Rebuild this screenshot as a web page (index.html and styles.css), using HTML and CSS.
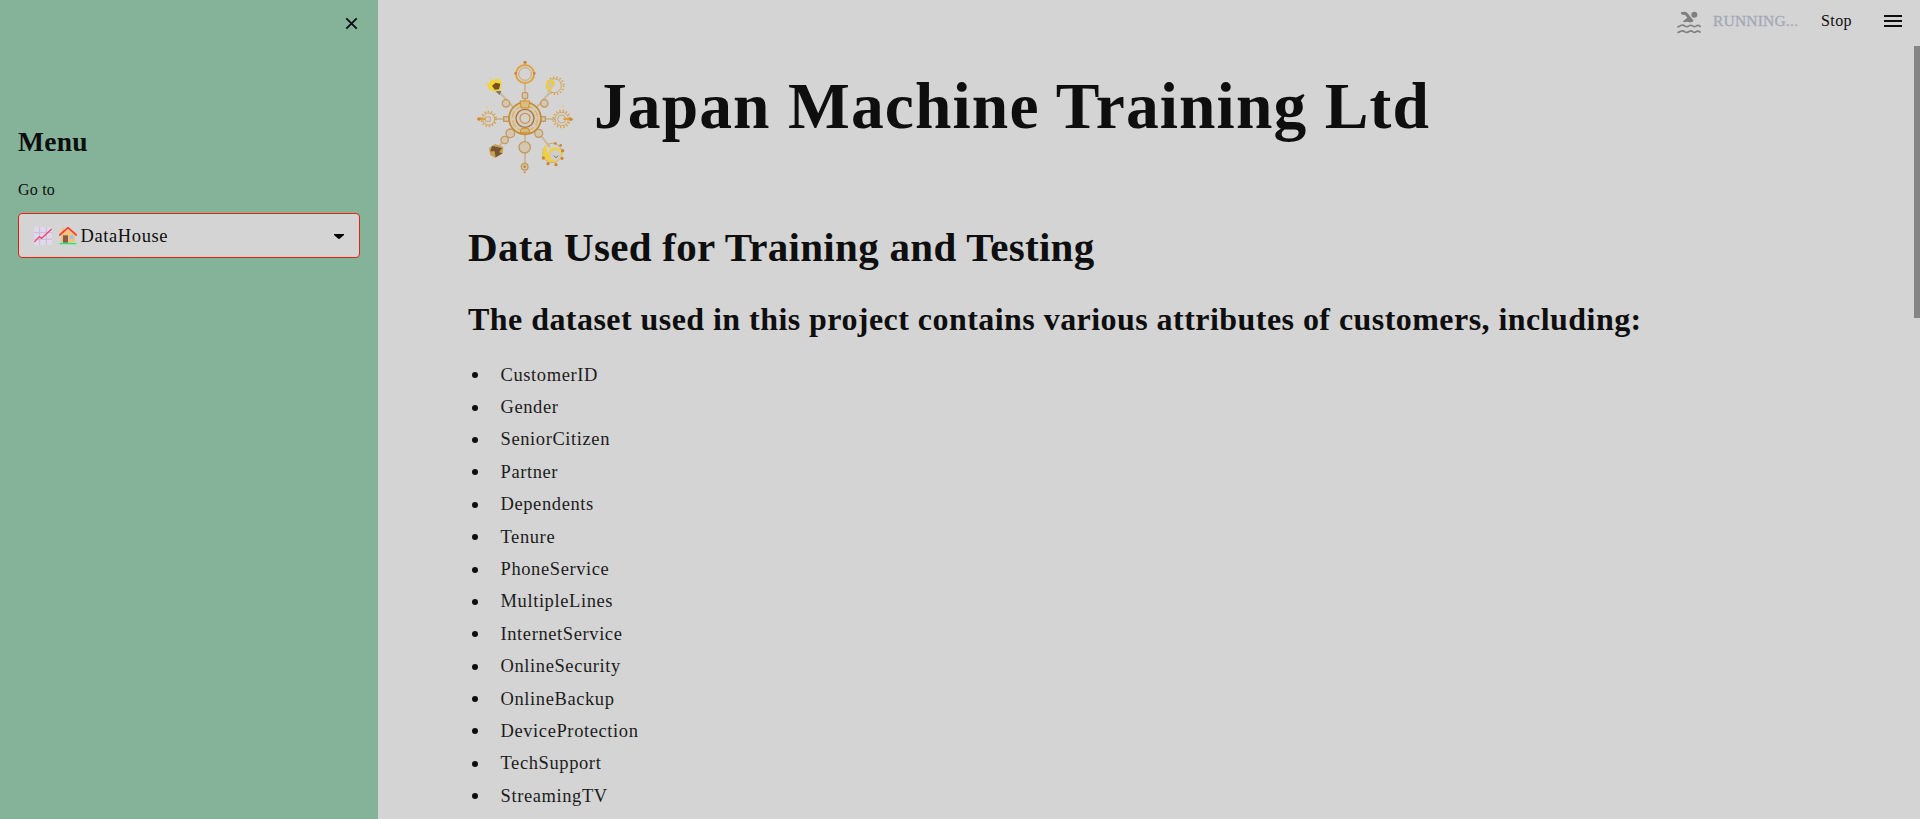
FILE: index.html
```html
<!DOCTYPE html>
<html lang="en">
<head>
<meta charset="utf-8">
<title>Japan Machine Training Ltd</title>
<link rel="stylesheet" href="styles.css">
</head>
<body>
<div class="app">
  <aside class="sidebar">
    <div class="sidebar-top">
      <svg class="close" viewBox="0 0 14 14"><path d="M1.4 1.4 12.6 12.6M12.6 1.4 1.4 12.6"/></svg>
    </div>
    <h2 class="menu-title">Menu</h2>
    <label class="menu-label">Go to</label>
    <div class="select">
      <svg class="emoji" viewBox="0 0 54 54">
        <rect width="54" height="54" rx="4" fill="#e1d8ec"/>
        <path d="M17 0V54M37 0V54M0 17H54M0 37H54" stroke="#c6bcd6" stroke-width="3" fill="none"/>
        <path d="M2 44 16 29 23 34 52 7" stroke="#f8416f" stroke-width="4" fill="none" stroke-linecap="round" stroke-linejoin="round"/>
      </svg>
      <svg class="emoji" viewBox="0 0 54 54">
        <path d="M8 2H16V12L27 4 48 24V48H6V12H8Z" fill="#f9c27a"/>
        <path d="M2 24 27 2 52 24" stroke="#f44336" stroke-width="5" fill="none" stroke-linecap="round" stroke-linejoin="round"/>
        <rect x="12" y="25" width="15" height="22" fill="#8b5a49"/>
        <rect x="32" y="25" width="11" height="11" fill="#8fc7f2"/>
        <rect x="1" y="48" width="52" height="4" rx="2" fill="#00f28c"/>
      </svg>
      <span class="select-value">DataHouse</span>
      <svg class="caret" viewBox="0 0 10 5" preserveAspectRatio="none"><path d="M0 0H10V.9L6 4.5Q5 5.3 4 4.5L0 .9Z"/></svg>
    </div>
  </aside>
  <main class="main">
    <header class="toolbar">
      <svg class="swimmer" viewBox="0 0 72 68">
        <circle cx="52" cy="11" r="9"/>
        <path d="M12 3 22 2Q28 2 32 6L50 29Q46 34 39 34Q31 30 24 33L17 31L31 20L25 12L12 9Z"/>
        <path class="wave" d="M1 47Q7 47 11 43Q18 40 24 45Q30 49 36 44Q42 40 48 45Q54 49 60 43Q65 42 71 47M1 64Q7 64 11 60Q18 57 24 62Q30 66 36 61Q42 57 48 62Q54 66 60 60Q65 59 71 64"/>
      </svg>
      <span class="running">RUNNING...</span>
      <span class="stop">Stop</span>
      <svg class="burger" viewBox="0 0 18 12"><path d="M0 1H18M0 6H18M0 11H18"/></svg>
    </header>
    <div class="content">
      <div class="brand">
        <svg class="logo" viewBox="0 0 390 390">
          <g class="arm">
            <path d="M195 155V98M195 250V350M145 207H104M245 207H285M160 172 114 122M230 172 270 127M158 240 112 295M230 240 270 292"/>
          </g>
          <g class="gear">
            <circle cx="195" cy="72" r="27"/><circle class="thin" cx="195" cy="72" r="19"/>
            <circle class="teeth" cx="86" cy="207" r="22"/><circle class="thin" cx="86" cy="207" r="18"/>
            <circle class="teeth" cx="305" cy="207" r="25"/><circle class="thin" cx="305" cy="207" r="20"/><circle class="thin" cx="305" cy="207" r="12"/>
            <circle class="teeth" cx="286" cy="107" r="25"/><circle class="thin" cx="283" cy="107" r="21"/>
            <circle class="thin" cx="277" cy="309" r="29"/>
            <path d="M52 207H78M310 207H336"/><path class="thin" d="M76 201H91V214H76Z"/>
          </g>
          <g class="joint">
            <rect x="187" y="128" width="16" height="18" rx="4"/>
            <circle cx="138" cy="160" r="11"/><circle cx="253" cy="160" r="11"/>
            <circle cx="151" cy="250" r="13"/><circle cx="134" cy="270" r="11"/>
            <circle cx="236" cy="250" r="12"/><circle cx="194" cy="292" r="17"/><circle cx="194" cy="350" r="10"/>
            <rect x="131" y="200" width="16" height="14"/><rect x="242" y="200" width="14" height="14"/>
          </g>
          <circle cx="195" cy="205" r="48" fill="#d4cbb8" stroke="#c48b35" stroke-width="5"/>
          <circle cx="195" cy="205" r="38" fill="none" stroke="#dfb25c" stroke-width="4" stroke-dasharray="22 8"/>
          <circle cx="195" cy="205" r="27" fill="#d5cdc1" stroke="#a87543" stroke-width="4"/>
          <circle cx="195" cy="205" r="15" fill="#d4d0ca" stroke="#c99552" stroke-width="4"/>
          <path d="M184 174 180 153H209L206 174ZM184 236 180 248H209L206 236Z" fill="#d8bd83" stroke="#d28e24" stroke-width="3"/>
          <path d="M82 113Q84 96 96 89L119 86 126 102 117 126 103 124 91 121Z" fill="#f4d43c"/>
          <path d="M96 107 107 98 121 101 117 118 104 119Z" fill="#74521d"/>
          <path d="M106 124 119 135 124 123Z" fill="#817062"/>
          <path d="M87 294 105 282 130 291 128 310 106 324 91 315Z" fill="#c9a151"/>
          <path d="M96 288 126 294 117 307 128 310 107 322 104 304 91 304Z" fill="#75552f"/>
          <path d="M258 95 272 88Q285 91 286 104L274 119 264 122 257 110Z" fill="#eacb52"/>
          <circle cx="271" cy="105" r="7" fill="#c9c4bd"/>
          <path d="M248 317Q245 291 264 282Q255 299 266 311Q267 291 286 292Q306 294 306 315Q301 335 280 336Q261 337 248 317Z" fill="#f0ce45"/>
          <circle cx="286" cy="316" r="16" fill="#cecdd1"/><path d="M281 317 288 323 295 317" fill="none" stroke="#93764e" stroke-width="3"/>
          <g fill="#c9873a">
            <circle cx="195" cy="37" r="5"/><circle cx="167" cy="70" r="4"/><circle cx="223" cy="70" r="4"/>
            <circle cx="57" cy="207" r="5"/><circle cx="333" cy="208" r="5"/>
            <circle cx="250" cy="324" r="5"/><circle cx="264" cy="341" r="5"/><circle cx="288" cy="344" r="5"/><circle cx="306" cy="325" r="5"/><circle cx="308" cy="302" r="5"/><circle cx="302" cy="286" r="4"/><circle cx="286" cy="280" r="4"/><circle cx="194" cy="350" r="4"/><circle cx="194" cy="367" r="3"/>
          </g>
          <path d="M78 101 84 104M90 83 93 87M81 168V174M310 165V171" stroke="#e9cd64" stroke-width="4"/>
        </svg>
        <h1 class="brand-name">Japan Machine Training Ltd</h1>
      </div>
      <h2 class="title">Data Used for Training and Testing</h2>
      <h3 class="subtitle">The dataset used in this project contains various attributes of customers, including:</h3>
      <ul class="fields">
        <li>CustomerID</li>
        <li>Gender</li>
        <li>SeniorCitizen</li>
        <li>Partner</li>
        <li>Dependents</li>
        <li>Tenure</li>
        <li>PhoneService</li>
        <li>MultipleLines</li>
        <li>InternetService</li>
        <li>OnlineSecurity</li>
        <li>OnlineBackup</li>
        <li>DeviceProtection</li>
        <li>TechSupport</li>
        <li>StreamingTV</li>
      </ul>
    </div>
    <div class="scroll-thumb"></div>
  </main>
</div>
</body>
</html>
```
FILE: styles.css
```css
* { box-sizing: border-box; }
html, body { margin: 0; height: 100%; overflow: hidden; }
body {
  background: #d4d4d4;
  color: #0e0e0e;
  font-family: "Source Serif Pro", "Liberation Serif", serif;
}
h1, h2, h3, ul { margin: 0; padding: 0; }
svg { display: block; flex: none; }
.app { display: flex; height: 100vh; }

.sidebar { width: 378px; flex: none; padding: 0 18px; background: #84b39a; }
.sidebar-top { height: 124px; display: flex; justify-content: flex-end; padding: 17px 2px 0 0; }
.close { width: 13px; height: 13px; }
.close path { stroke: #0e0e0e; stroke-width: 2; fill: none; }
.menu-title { font-size: 27.5px; line-height: 36px; letter-spacing: .25px; }
.menu-label { display: block; margin-top: 20px; font-size: 16px; line-height: 20px; letter-spacing: .2px; }
.select {
  display: flex; align-items: center;
  height: 45px; margin-top: 13px; padding: 0 15px 0 15px;
  background: #d4d4d4; border: 1px solid #e8200e; border-radius: 4px;
}
.emoji { width: 18px; height: 18px; margin-right: 6.5px; }
.emoji + .emoji { margin-right: 4px; }
.select-value { flex: 1; font-size: 18.5px; letter-spacing: .6px; line-height: 24px; }
.caret { width: 10px; height: 5px; margin-top: 1px; }

.main { position: relative; flex: 1; min-width: 0; overflow: hidden; }
.toolbar { display: flex; align-items: center; justify-content: flex-end; height: 42px; padding-right: 18px; font-size: 16px; }
.swimmer { width: 24px; height: 23px; margin: 3px 12px 0 0; fill: #808080; }
.wave { fill: none; stroke: #808080; stroke-width: 5; }
.running { width: 108px; color: #a3a8b8; font-size: 15.5px; -webkit-text-stroke: .3px #a3a8b8; letter-spacing: .2px; }
.stop { width: 63px; letter-spacing: .4px; }
.burger { width: 18px; height: 12px; }
.burger path { stroke: #0e0e0e; stroke-width: 2; }

.content { padding: 8px 0 0 90px; }
.brand { display: flex; height: 130px; margin-left: -8px; }
.logo { width: 130px; height: 130px; }
.arm { fill: none; stroke: #ccb798; stroke-width: 6; }
.gear { fill: none; stroke: #e0a239; stroke-width: 6; }
.gear .thin { stroke: #cfa568; stroke-width: 3; }
.gear .teeth { stroke-width: 6; stroke-dasharray: 4 6; }
.joint { fill: #d4c7b2; stroke: #c49a5e; stroke-width: 4; }
.brand-name { margin: 17px 0 0 4px; font-size: 65.5px; line-height: 78px; letter-spacing: 1.1px; white-space: nowrap; }
.title { margin-top: 42px; font-size: 41px; line-height: 50px; letter-spacing: .3px; white-space: nowrap; }
.subtitle { margin-top: 27px; font-size: 32px; line-height: 40px; letter-spacing: .45px; white-space: nowrap; }
.fields { margin-top: 20px; list-style: none; font-size: 18.5px; letter-spacing: .6px; color: #1c1c1c; }
.fields li { display: flex; align-items: center; height: 32.4px; }
.fields li::before { content: ""; width: 6px; height: 6px; margin: 0 22.5px 0 4px; border-radius: 50%; background: #0e0e0e; }
.scroll-thumb { position: absolute; top: 46px; right: 0; width: 6px; height: 272px; background: #858585; }
```
